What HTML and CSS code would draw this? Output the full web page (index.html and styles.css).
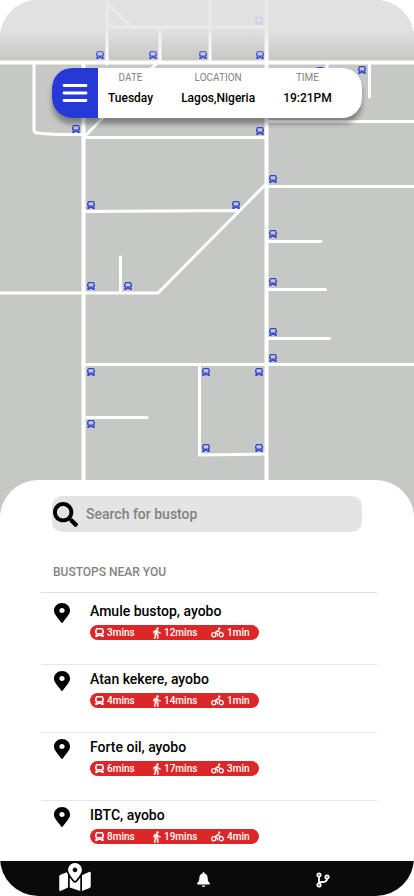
FILE: index.html
```html
<!DOCTYPE html>
<html lang="en">
<head>
<meta charset="utf-8">
<meta name="viewport" content="width=device-width, initial-scale=1">
<title>Bustops</title>
<link rel="stylesheet" href="styles.css">
</head>
<body>
<svg class="symbols" aria-hidden="true">
  <symbol id="bus" viewBox="0 0 16 16">
    <path fill-rule="evenodd" d="M4 0h8c2 0 3 1 3 3v1h1v5h-1v1.500l-1 1 1.500 1.500v3h-4L10 14H6l-1.500 2h-4v-3L2 11.500l-1-1V9H0V4h1V3c0-2 1-3 3-3zM4.500 2.500C3.500 2.500 3 3 3 4v3.500C3 8.500 3.500 9 4.500 9h7c1 0 1.500-.5 1.500-1.500V4c0-1-.5-1.500-1.500-1.500zM4.500 11v1.500H6V11zM10 11v1.500h1.500V11z"/>
  </symbol>
  <symbol id="walk" viewBox="5 1 15 22">
    <path stroke="currentColor" stroke-width=".7" d="M13.500 5.500c1.100 0 2-.9 2-2s-.9-2-2-2-2 .9-2 2 .9 2 2 2zM9.800 8.900L7 23h2.100l1.800-8 2.100 2v6h2v-7.500l-2.100-2 .6-3C14.800 12 16.800 13 19 13v-2c-1.900 0-3.500-1-4.300-2.400l-1-1.600c-.4-.6-1-1-1.700-1-.3 0-.5.1-.8.1L6 8.300V13h2V9.600l1.800-.7"/>
  </symbol>
  <symbol id="bike" viewBox="0 0 26 20">
    <g fill="none" stroke="currentColor" stroke-width="2.400" stroke-linecap="round" stroke-linejoin="round">
      <circle cx="5.500" cy="14.500" r="4.100"/>
      <circle cx="20.500" cy="14.500" r="4.100"/>
      <path d="M13 17v-4l-4-3.500L14 6l3 3.500h4"/>
    </g>
    <circle cx="16.500" cy="2.500" r="2.300"/>
  </symbol>
  <symbol id="pin" viewBox="0 0 384 512" preserveAspectRatio="none">
    <path d="M172.268 501.670C26.970 291.031 0 269.413 0 192 0 85.961 85.961 0 192 0s192 85.961 192 192c0 77.413-26.970 99.031-172.268 309.670-9.535 13.774-29.930 13.773-39.464 0zM192 256c35 0 64-29 64-64s-29-64-64-64-64 29-64 64 29 64 64 64z"/>
  </symbol>
</svg>

<div class="app">
  <header class="map">
    <svg class="map-canvas" viewBox="0 0 414 520" role="img" aria-label="Map of bustops">
      <defs>
        <linearGradient id="haze" x1="0" y1="0" x2="0" y2="1">
          <stop offset="0" stop-color="#e6e6e6" stop-opacity=".85"/>
          <stop offset=".48" stop-color="#e6e6e6" stop-opacity=".85"/>
          <stop offset="1" stop-color="#e6e6e6" stop-opacity="0"/>
        </linearGradient>
      </defs>
      <g class="roads">
        <path d="M107 0V64M107 27H266M107 3L131 27M160 27V60L84 137M210 0V62M34 63V130Q34 133 38 133Q55 135 83 134.500"/>
        <path d="M84 137.500H266M327 62V72M369.500 64V97M267 121.500H414M84 211.500L239 210.500M267 186.500H414M0 293H158L266 184M120.500 257V292M267 241.500H321M267 289.500H325.500M267 338.500H329.500M84 364.500H414M84 417.500H147M199.500 366V455L266 454"/>
      </g>
      <path class="roads main" d="M0 62.500H414M83.500 64V520M266.500 0V520"/>
      <g class="stops">
        <use href="#bus" x="96" y="51" width="8" height="8"/>
        <use href="#bus" x="149" y="51" width="8" height="8"/>
        <use href="#bus" x="199" y="51" width="8" height="8"/>
        <use href="#bus" x="256" y="51" width="8" height="8"/>
        <use href="#bus" x="255" y="17" width="8" height="8"/>
        <use href="#bus" x="316" y="67" width="8" height="8"/>
        <use href="#bus" x="358" y="66" width="8" height="8"/>
        <use href="#bus" x="72" y="125" width="8" height="8"/>
        <use href="#bus" x="256" y="127" width="8" height="8"/>
        <use href="#bus" x="269" y="175" width="8" height="8"/>
        <use href="#bus" x="87" y="201" width="8" height="8"/>
        <use href="#bus" x="232" y="201" width="8" height="8"/>
        <use href="#bus" x="87" y="282" width="8" height="8"/>
        <use href="#bus" x="124" y="282" width="8" height="8"/>
        <use href="#bus" x="269" y="230" width="8" height="8"/>
        <use href="#bus" x="269" y="278" width="8" height="8"/>
        <use href="#bus" x="269" y="328" width="8" height="8"/>
        <use href="#bus" x="269" y="354" width="8" height="8"/>
        <use href="#bus" x="87" y="368" width="8" height="8"/>
        <use href="#bus" x="202" y="368" width="8" height="8"/>
        <use href="#bus" x="255" y="368" width="8" height="8"/>
        <use href="#bus" x="87" y="420" width="8" height="8"/>
        <use href="#bus" x="202" y="444" width="8" height="8"/>
        <use href="#bus" x="255" y="444" width="8" height="8"/>
      </g>
      <rect width="414" height="60" fill="url(#haze)"/>
    </svg>
    <div class="info">
      <button class="menu" type="button" aria-label="Menu">
        <svg width="26" height="20" viewBox="0 0 26 20" aria-hidden="true"><path d="M2 2.500h22M2 10h22M2 17.500h22" stroke="#fff" stroke-width="2.800" stroke-linecap="round"/></svg>
      </button>
      <dl class="facts">
        <div><dt>DATE</dt><dd>Tuesday</dd></div>
        <div><dt>LOCATION</dt><dd>Lagos,Nigeria</dd></div>
        <div><dt>TIME</dt><dd>19:21PM</dd></div>
      </dl>
    </div>
  </header>

  <main class="sheet">
    <form class="search">
      <label for="q" aria-label="Search">
        <svg width="25" height="25" viewBox="0 0 512 512" aria-hidden="true"><path d="M505 442.700L405.300 343c-4.500-4.500-10.600-7-17-7H372c27.600-35.300 44-79.700 44-128C416 93.100 322.900 0 208 0S0 93.100 0 208s93.100 208 208 208c48.300 0 92.700-16.400 128-44v16.300c0 6.400 2.500 12.500 7 17l99.700 99.700c9.400 9.400 24.600 9.400 33.900 0l28.300-28.300c9.400-9.400 9.400-24.600.1-34zM208 336c-70.700 0-128-57.200-128-128 0-70.700 57.200-128 128-128 70.700 0 128 57.200 128 128 0 70.700-57.200 128-128 128z"/></svg>
      </label>
      <input id="q" type="text" placeholder="Search for bustop">
    </form>
    <h2>BUSTOPS NEAR YOU</h2>
    <ul class="list">
      <li>
        <svg class="pin" aria-hidden="true"><use href="#pin"/></svg>
        <div>
          <h3>Amule bustop, ayobo</h3>
          <p class="times"><span><svg class="bus"><use href="#bus"/></svg>3mins</span><span><svg class="walk"><use href="#walk"/></svg>12mins</span><span><svg class="bike"><use href="#bike"/></svg>1min</span></p>
        </div>
      </li>
      <li>
        <svg class="pin" aria-hidden="true"><use href="#pin"/></svg>
        <div>
          <h3>Atan kekere, ayobo</h3>
          <p class="times"><span><svg class="bus"><use href="#bus"/></svg>4mins</span><span><svg class="walk"><use href="#walk"/></svg>14mins</span><span><svg class="bike"><use href="#bike"/></svg>1min</span></p>
        </div>
      </li>
      <li>
        <svg class="pin" aria-hidden="true"><use href="#pin"/></svg>
        <div>
          <h3>Forte oil, ayobo</h3>
          <p class="times"><span><svg class="bus"><use href="#bus"/></svg>6mins</span><span><svg class="walk"><use href="#walk"/></svg>17mins</span><span><svg class="bike"><use href="#bike"/></svg>3min</span></p>
        </div>
      </li>
      <li>
        <svg class="pin" aria-hidden="true"><use href="#pin"/></svg>
        <div>
          <h3>IBTC, ayobo</h3>
          <p class="times"><span><svg class="bus"><use href="#bus"/></svg>8mins</span><span><svg class="walk"><use href="#walk"/></svg>19mins</span><span><svg class="bike"><use href="#bike"/></svg>4min</span></p>
        </div>
      </li>
    </ul>
  </main>

  <nav class="tabs">
    <a class="current" href="#map" aria-label="Map">
      <svg width="32" height="28" viewBox="0 0 576 512"><path d="M288 0c-69.590 0-126 56.410-126 126 0 56.260 82.350 158.800 113.900 196.020 6.390 7.540 17.820 7.540 24.200 0C331.650 284.800 414 182.260 414 126 414 56.410 357.590 0 288 0zm0 168c-23.200 0-42-18.800-42-42s18.800-42 42-42 42 18.800 42 42-18.800 42-42 42zM20.120 215.950A32.006 32.006 0 0 0 0 245.660v250.320c0 11.320 11.430 19.060 21.940 14.860L160 448V214.920c-8.840-15.980-16.070-31.540-21.250-46.420L20.120 215.950zM288 359.670c-14.070 0-27.380-6.180-36.510-16.960-19.660-23.200-40.570-49.620-59.490-76.720v182l192 64V266c-18.920 27.090-39.820 53.520-59.490 76.720-9.130 10.770-22.440 16.950-36.510 16.950zm266.060-198.510L416 224v288l139.880-55.950A31.996 31.996 0 0 0 576 426.340V176.020c0-11.320-11.430-19.060-21.940-14.860z"/></svg>
    </a>
    <a href="#alerts" aria-label="Alerts">
      <svg width="13" height="15" viewBox="0 0 448 512"><path d="M224 512c35 0 64-20 64-48H160c0 28 29 48 64 48zm215-126c-20-22-71-60-71-178 0-78-42-140-112-155V32c0-18-14-32-32-32s-32 14-32 32v21C122 68 80 130 80 208c0 118-51 156-71 178-6 6-9 14-9 20 0 16 13 26 32 26h384c19 0 32-10 32-26 0-6-3-14-9-20z"/></svg>
    </a>
    <a href="#routes" aria-label="Routes">
      <svg width="14" height="16" viewBox="0 0 14 16"><g fill="none" stroke="#fff" stroke-width="1.800"><circle cx="3" cy="3" r="1.700"/><circle cx="3" cy="13" r="1.700"/><circle cx="11" cy="5" r="1.700"/><path d="M3 5v6M11 7c0 3-3 3-5 3-2 0-3 .5-3 1.500"/></g></svg>
    </a>
  </nav>
</div>
</body>
</html>
```
FILE: styles.css
```css
* {
  box-sizing: border-box;
}

body,
h2,
h3,
p,
ul,
dl,
dd {
  margin: 0;
  padding: 0;
}

body {
  background: #fff;
  color: #000;
  font-family: Roboto, sans-serif;
  font-weight: 500;
}

svg {
  display: block;
  flex: none;
}

.symbols {
  position: absolute;
  width: 0;
  height: 0;
}

.app {
  display: flex;
  flex-direction: column;
  min-height: 100vh;
  overflow: hidden;
  border-radius: 38px;
}

/* Map */
.map {
  position: relative;
}

.map-canvas {
  width: 100%;
  height: auto;
  background: #c6c8c5;
}

.roads {
  fill: none;
  stroke: #fff;
  stroke-width: 3;
  stroke-linecap: round;
}

.main {
  stroke-width: 4;
}

.stops {
  fill: #3446d6;
}

.info {
  position: absolute;
  top: 68px;
  left: 52px;
  right: 52px;
  display: flex;
  height: 50px;
  overflow: hidden;
  border-radius: 20px;
  background: #fff;
  box-shadow: 0 6px 5px rgba(0, 0, 0, 0.35);
}

.menu {
  display: grid;
  place-items: center;
  width: 46px;
  padding: 0;
  border: 0;
  background: #2638d6;
}

.facts {
  display: flex;
  gap: 28px;
  padding: 3px 0 0 10px;
  text-align: center;
}

.facts dt {
  color: #828282;
  font-size: 10px;
  font-weight: 400;
  line-height: 14px;
}

.facts dd {
  margin-top: 5px;
  font-size: 12px;
  line-height: 16px;
}

/* Bottom sheet */
.sheet {
  position: relative;
  flex: 1;
  margin-top: -40px;
  padding: 16px 37px 0 41px;
  border-radius: 38px 38px 0 0;
  background: #fff;
}

.search {
  display: flex;
  align-items: center;
  gap: 8px;
  height: 36px;
  margin: 0 15px 0 11px;
  padding-left: 1px;
  border-radius: 10px;
  background: #e4e4e4;
}

.search input {
  flex: 1;
  min-width: 0;
  padding: 0;
  border: 0;
  outline: 0;
  background: none;
  font: inherit;
  font-size: 14px;
}

.search input::placeholder {
  color: #828282;
}

h2 {
  margin-top: 32px;
  padding: 0 12px 12px;
  border-bottom: 1px solid #e0e0e0;
  color: #828282;
  font-size: 12px;
  font-weight: 500;
  line-height: 16px;
}

.list {
  padding-top: 3px;
  list-style: none;
}

.list li {
  display: flex;
  gap: 20px;
  height: 68px;
  padding: 6px 0 0 13px;
  border-top: 1px solid #e8e8e8;
}

.list li:first-child {
  border-color: transparent;
}

.list li:last-child {
  height: 61px;
}

.pin {
  width: 16px;
  height: 20px;
}

h3 {
  font-size: 14px;
  font-weight: 500;
  line-height: 16px;
}

.times {
  display: grid;
  grid-template-columns: 58px 58px auto;
  width: 169px;
  height: 15px;
  margin-top: 6px;
  padding-left: 5px;
  border-radius: 8px;
  background: #dc2728;
  color: #fff;
  fill: currentColor;
  font-size: 10px;
  line-height: 15px;
}

.times span {
  display: flex;
  align-items: center;
  gap: 3px;
}

.bus {
  width: 9px;
  height: 9px;
}

.walk {
  width: 8px;
  height: 12px;
}

.bike {
  width: 13px;
  height: 11px;
}

/* Tab bar */
.tabs {
  position: relative;
  display: flex;
  justify-content: space-between;
  align-items: center;
  height: 35px;
  padding: 2px 84px 0 59px;
  background: #0a0a0b;
}

.tabs a {
  fill: #fff;
}

.tabs .current {
  align-self: flex-start;
}
```
